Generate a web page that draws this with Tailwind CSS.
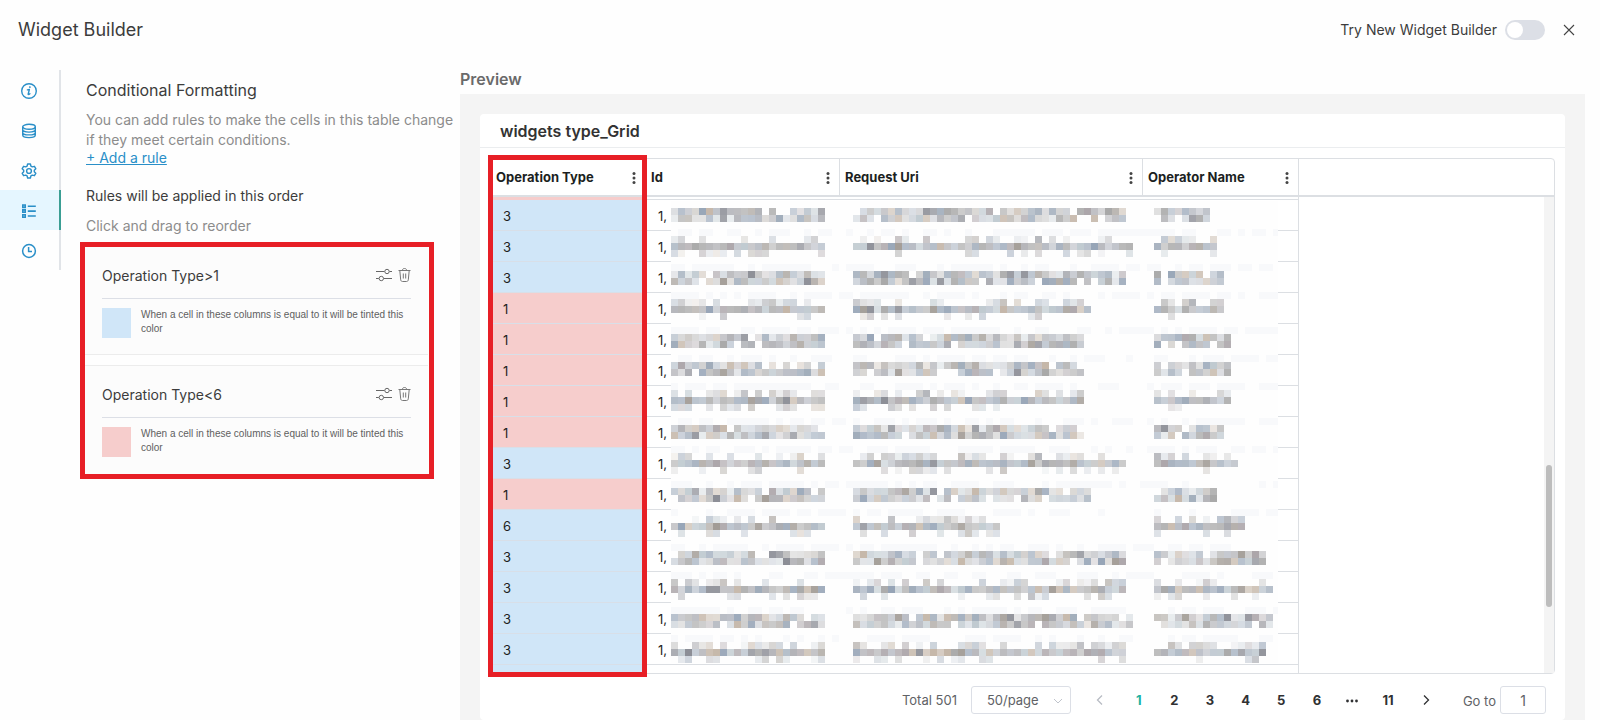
<!DOCTYPE html>
<html lang="en">
<head>
  <meta charset="UTF-8" />
  <meta name="viewport" content="width=device-width, initial-scale=1.0"/>
  <title>Widget Builder</title>
  <script src="https://cdn.jsdelivr.net/npm/@tailwindcss/browser@4"></script>
</head>
<body class="bg-[#fefefe] text-[#3c3c3c] font-['Inter',sans-serif] h-screen flex flex-col overflow-hidden">

  <!-- Top bar -->
  <header class="flex items-center justify-between h-[60px] pl-[18px] pr-6 shrink-0">
    <h1 class="text-lg leading-6">Widget Builder</h1>
    <div class="flex items-center">
      <label for="newBuilder" class="text-sm mr-2">Try New Widget Builder</label>
      <input type="checkbox" id="newBuilder" role="switch"
             class="appearance-none w-10 h-5 rounded-full bg-[#dcdfe6] before:block before:size-4 before:m-0.5 before:rounded-full before:bg-white checked:bg-teal-500 checked:before:ml-[22px]" />
      <button class="ml-[17px]" aria-label="Close">
        <svg class="size-[14px]" viewBox="0 0 14 14" fill="none" stroke="#444" stroke-width="1.1"><path d="M2 2l10 10M12 2L2 12"/></svg>
      </button>
    </div>
  </header>

  <div class="flex flex-1 min-h-0 pt-[10px]">

    <!-- Side tabs -->
    <nav class="w-[61px] shrink-0 text-[#2a8fc8]">
      <button class="flex items-center justify-center w-full h-10 pt-0.5 pr-0.5 border-r-2 border-[#e1e4e8]" aria-label="Info">
        <svg class="size-4" viewBox="0 0 16 16" fill="none" stroke="currentColor" stroke-width="1.4"><circle cx="8" cy="8" r="7.3"/><path d="M6.4 6.9l2-.5-1.2 4.6c-.2.8.5.8 1.7-.2" stroke-linecap="round" stroke-linejoin="round"/><circle cx="8.9" cy="4.1" r=".5" fill="currentColor" stroke-width=".9"/></svg>
      </button>
      <button class="flex items-center justify-center w-full h-10 pt-0.5 pr-0.5 border-r-2 border-[#e1e4e8]" aria-label="Data">
        <svg class="size-4" viewBox="0 0 16 16" fill="none" stroke="currentColor" stroke-width="1.4"><ellipse cx="8" cy="3.8" rx="6.3" ry="2.5"/><path d="M1.7 3.8v8.2c0 1.5 2.8 2.6 6.3 2.6s6.3-1.1 6.3-2.6V3.8M1.7 6.6C1.7 8 4.5 9.1 8 9.1s6.3-1.1 6.3-2.5M1.7 9.4c0 1.4 2.8 2.5 6.3 2.5s6.3-1.1 6.3-2.5"/></svg>
      </button>
      <button class="flex items-center justify-center w-full h-10 pt-0.5 pr-0.5 border-r-2 border-[#e1e4e8]" aria-label="Settings">
        <svg class="size-4" viewBox="0 0 16 16" fill="none" stroke="currentColor" stroke-width="1.4" stroke-linejoin="round"><path d="M6.6 1h2.8l.5 2.1 1.4.8 2.1-.6 1.4 2.4L13.3 7.2v1.6l1.5 1.5-1.4 2.4-2.1-.6-1.4.8-.5 2.1H6.6l-.5-2.1-1.4-.8-2.1.6-1.4-2.4L2.7 8.8V7.2L1.2 5.7l1.4-2.4 2.1.6 1.4-.8z"/><circle cx="8" cy="8" r="2.4"/></svg>
      </button>
      <button class="flex items-center justify-center w-full h-10 pt-0.5 pr-0.5 border-r-2 border-[#3a9e94] bg-[#e5f6ff]" aria-label="Conditional formatting">
        <svg class="size-4" viewBox="0 0 16 16" fill="none" stroke="currentColor" stroke-width="1.6"><path d="M6.8 3.2h8M6.8 8.1h8M6.8 13h8"/><path d="M1.8 2h2.4v2.4H1.8zM1.8 6.9h2.4v2.4H1.8zM1.8 11.8h2.4v2.4H1.8z"/></svg>
      </button>
      <button class="flex items-center justify-center w-full h-10 pt-0.5 pr-0.5 border-r-2 border-[#e1e4e8]" aria-label="Schedule">
        <svg class="size-4" viewBox="0 0 16 16" fill="none" stroke="currentColor" stroke-width="1.5"><circle cx="8" cy="8" r="6.4"/><path d="M7.6 4v4.6h3.4"/></svg>
      </button>
    </nav>

    <!-- Rules panel -->
    <section class="w-[399px] shrink-0 pl-[19px]">
      <div class="pl-[6px] text-sm">
        <h2 class="text-base leading-5 pt-[10px]">Conditional Formatting</h2>
        <p class="leading-5 text-[#8c8c8c] pt-[10px]">You can add rules to make the cells in this table change<br />if they meet certain conditions.</p>
        <a href="#" class="block w-fit leading-4 text-[#2a8fc8] underline">+ Add a rule</a>
        <p class="leading-5 pt-5">Rules will be applied in this order</p>
        <p class="leading-5 pt-[10px] text-[#8c8c8c]">Click and drag to reorder</p>
      </div>

      <div id="ruleList" class="mt-[6px] w-[354px] border-[5px] border-[#e71f26] flex flex-col gap-[10px] pr-px"></div>
    </section>

    <!-- Preview -->
    <section class="flex-1 min-w-0 flex flex-col pr-[15px]">
      <h2 class="text-base font-semibold leading-[18px] text-[#6a6a6a] h-6 shrink-0">Preview</h2>
      <div class="flex-1 bg-[#f4f4f4] px-5 pt-5">
        <div class="bg-white rounded h-full">
          <h3 class="h-[34px] leading-[34px] px-5 text-base font-semibold text-[#333] border-b border-[#ebedef]">widgets type_Grid</h3>

          <div class="relative mx-[10px] mt-[10px] border border-[#dcdfe3] rounded">
            <table class="w-full table-fixed border-separate border-spacing-0 text-[#1c1f22]">
              <colgroup><col class="w-[155px]"/><col class="w-[194px]"/><col class="w-[303px]"/><col class="w-[156px]"/><col/></colgroup>
              <thead id="gridHead" class="text-[13px]"></thead>
              <tbody id="gridBody" class="text-[13px] leading-5"></tbody>
            </table>
            <canvas id="mask" width="607" height="462" class="absolute left-[180px] top-[42px]"></canvas>
            <div class="absolute right-0 top-[38px] bottom-0 w-[10px] bg-[#f4f4f4]">
              <div class="absolute left-[2px] top-[268px] w-[6px] h-[142px] rounded-full bg-[#bdbdbd]"></div>
            </div>
            <div class="absolute -left-[3px] -top-[4px] -bottom-[4px] w-[159px] border-[5px] border-[#e71f26]"></div>
          </div>

          <!-- Pagination -->
          <div class="flex items-center justify-end pr-[19px] pt-3 text-[13px] text-[#606266]">
            <span class="pt-0.5">Total 501</span>
            <div class="relative ml-[14px]">
              <select aria-label="Page size" class="appearance-none w-[100px] h-7 pt-0.5 pl-[15px] border border-[#dcdfe6] rounded-[3px] bg-white">
                <option>50/page</option>
              </select>
              <svg class="absolute right-[7px] top-[9px] size-3 pointer-events-none" viewBox="0 0 12 12" fill="none" stroke="#c0c4cc"><path d="M2 4l4 4 4-4"/></svg>
            </div>
            <button class="ml-[22px] w-[14px]" aria-label="Previous page">
              <svg class="size-[14px]" viewBox="0 0 14 14" fill="none" stroke="#b8bcc4" stroke-width="1.3"><path d="M9 2.5L4.5 7 9 11.5"/></svg>
            </button>
            <div class="grid grid-cols-8 w-[285px] ml-[14px] pt-0.5 font-bold text-[#303133]">
              <button class="text-[#22b2a2]">1</button>
              <button>2</button>
              <button>3</button>
              <button>4</button>
              <button>5</button>
              <button>6</button>
              <button aria-label="More pages" class="flex items-center justify-center">
                <svg class="w-3 h-1" viewBox="0 0 12 4" fill="currentColor"><circle cx="1.5" cy="2" r="1.4"/><circle cx="6" cy="2" r="1.4"/><circle cx="10.5" cy="2" r="1.4"/></svg>
              </button>
              <button>11</button>
            </div>
            <button class="ml-[13px] w-[14px]" aria-label="Next page">
              <svg class="size-[14px]" viewBox="0 0 14 14" fill="none" stroke="#303133" stroke-width="1.3"><path d="M5 2.5L9.500 7 5 11.5"/></svg>
            </button>
            <label for="goTo" class="ml-[30px] mr-1 pt-1">Go to</label>
            <input id="goTo" type="text" value="1" class="w-[46px] h-7 border border-[#dcdfe6] rounded-[3px] text-center text-sm bg-white" />
          </div>
        </div>
      </div>
    </section>
  </div>

  <script>
    const rules = [
      { name: "Operation Type&gt;1", tint: "bg-[#d0e6f8]", box: "h-[108px] border-b" },
      { name: "Operation Type&lt;6", tint: "bg-[#f6cdcc]", box: "h-[109px] border-t" }
    ];
    document.getElementById('ruleList').innerHTML = rules.map(rule => `
      <div class="${rule.box} bg-[#fcfcfc] border-[#ececec] px-[17px] pt-[14px]">
        <div class="flex items-center h-[38px] pb-[8px] border-b border-[#dcdfe6]">
          <h4 class="flex-1 text-sm">${rule.name}</h4>
          <button aria-label="Edit rule" class="mr-[6px] mb-0.5">
            <svg class="w-4 h-[14px]" viewBox="0 0 16 14" fill="none" stroke="#666"><path d="M0 3.5h8.5M13.500 3.5H16M0 10.5h2.8M7.8 10.5H16"/><circle cx="11" cy="3.5" r="2.2"/><circle cx="5.3" cy="10.5" r="2.2"/></svg>
          </button>
          <button aria-label="Delete rule" class="mb-0.5">
            <svg class="w-[13px] h-[14px]" viewBox="0 0 13 14" fill="none" stroke="#777"><path d="M.5 2.5h12M4.3 2.3C4.5 1 5.3.5 6.5.5s2 .5 2.2 1.8M1.8 2.6l.9 9.2c.1 1 .8 1.7 1.8 1.7h4c1 0 1.7-.7 1.8-1.7l.9-9.2M5.3 5.5v5M7.7 5.5v5"/></svg>
          </button>
        </div>
        <div class="flex pt-[9px]">
          <div class="w-[29px] h-[30px] shrink-0 ${rule.tint}"></div>
          <p class="ml-[10px] font-['Liberation_Sans',sans-serif] text-[10px] leading-[14px] text-[#606060] whitespace-nowrap">When a cell in these columns is equal to it will be tinted this<br />color</p>
        </div>
      </div>
    `).join('');

    const columns = ["Operation Type", "Id", "Request Uri", "Operator Name"];
    document.getElementById('gridHead').innerHTML = `<tr class="h-[38px]">` + columns.map(col => `
      <th class="p-0 pl-[5px] pr-[9px] border-b-2 border-r border-[#dcdfe3] text-left font-bold">
        <div class="flex items-center justify-between pt-px">
          <span>${col}</span>
          <button aria-label="${col} menu"><svg class="w-1 h-3" viewBox="0 0 4 12" fill="#444"><circle cx="2" cy="1.5" r="1.5"/><circle cx="2" cy="6" r="1.5"/><circle cx="2" cy="10.5" r="1.5"/></svg></button>
        </div>
      </th>
    `).join('') + `<td class="border-b-2 border-[#dcdfe3]"></td></tr>`;

    // Type value, masked blocks in the uri and name columns, first mask line, mask lines
    const rows = [
      [3, 39, 8, 1, 2], [3, 40, 9, 5, 3], [3, 39, 10, 10, 2], [1, 34, 10, 14, 3], [1, 33, 11, 19, 2],
      [1, 33, 11, 23, 2], [1, 33, 11, 27, 3], [1, 33, 10, 32, 2], [3, 39, 12, 36, 3], [1, 34, 9, 41, 2],
      [6, 21, 13, 45, 3], [3, 39, 16, 50, 2], [3, 39, 17, 54, 3], [3, 40, 17, 59, 2], [3, 39, 16, 63, 3]
    ];

    function tint(type) {
      return type > 1 ? "bg-[#d0e6f8]" : "bg-[#f6cdcc]";
    }

    function stub(height, color, line) {
      return `
        <tr class="${height}">
          <td class="p-0 ${color}"></td>
          <td class="p-0 ${line} border-[#dcdfe3]"></td>
          <td class="p-0 ${line} border-[#dcdfe3]"></td>
          <td class="p-0 ${line} border-r border-[#dcdfe3]"></td>
          <td class="p-0"></td>
        </tr>`;
    }

    document.getElementById('gridBody').innerHTML =
      stub("h-[3px]", "bg-[#f6cdcc]", "border-b") +
      rows.map(([type]) => `
        <tr class="h-[31px]">
          <td class="p-0 pt-0.5 pl-3 border-b border-[#d8dfe8] ${tint(type)}">${type}</td>
          <td class="p-0 pt-0.5 pl-3 border-b border-[#dcdfe3]">1,</td>
          <td class="p-0 border-b border-[#dcdfe3]"></td>
          <td class="p-0 border-b border-r border-[#dcdfe3]"></td>
          <td class="p-0"></td>
        </tr>
      `).join('') +
      stub("h-2", "bg-[#d0e6f8]", "border-b-0");

    // Private values are hidden behind 7px blocks
    const ctx = document.getElementById('mask').getContext('2d');
    const block = 7;
    const tones = [
      [140, 142, 150], [162, 156, 150], [160, 172, 186], [180, 180, 184], [176, 186, 198],
      [196, 182, 168], [150, 164, 182], [172, 166, 170], [192, 202, 208], [168, 168, 168],
      [184, 188, 196], [178, 178, 178]
    ];
    let seed = 17;
    function rand() {
      seed = (seed * 16807) % 2147483647;
      return seed / 2147483647;
    }

    function paint(col, line, alpha) {
      const [r, g, b] = tones[Math.floor(rand() * tones.length)];
      ctx.fillStyle = `rgba(${r}, ${g}, ${b}, ${alpha})`;
      ctx.fillRect(col * block, line * block, block, block);
    }

    ctx.fillStyle = "#fefefe";
    ctx.fillRect(0, 0, 607, 462);
    rows.forEach(([type, uri, name, first, count], i) => {
      // faint remains of the row line
      for (let c = 0; i > 0 && c < 87; c++) {
        if (rand() < 0.6) {
          ctx.fillStyle = "#f8f9fb";
          ctx.fillRect(c * block, (first - 1) * block, block, block);
        }
      }
      [[0, 22], [26, uri], [69, name]].forEach(([start, width]) => {
        for (let c = start; c < start + width; c++) {
          if (count === 2) {
            if (rand() < 0.92) paint(c, first, 0.3 + rand() * 0.7);
            if (rand() < 0.92) paint(c, first + 1, 0.3 + rand() * 0.7);
          } else {
            if (rand() < 0.5) paint(c, first, 0.15 + rand() * 0.5);
            paint(c, first + 1, 0.6 + rand() * 0.4);
            if (rand() < 0.35) paint(c, first + 2, 0.15 + rand() * 0.4);
          }
        }
      });
    });
  </script>

</body>
</html>
